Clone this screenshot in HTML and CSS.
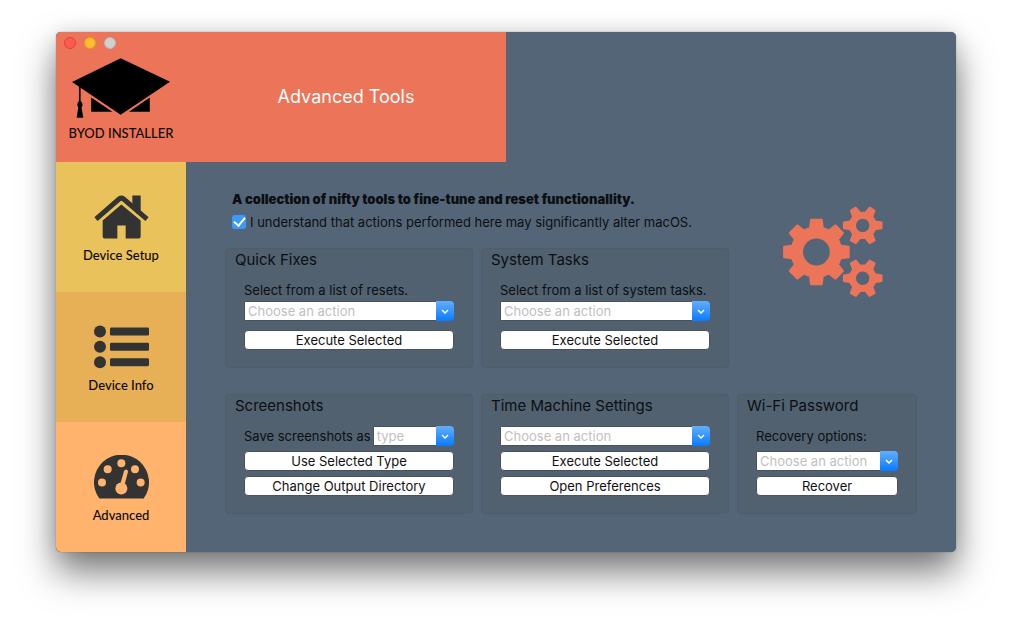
FILE: index.html
```html
<!DOCTYPE html>
<html lang="en">
<head>
<meta charset="utf-8">
<meta name="viewport" content="width=device-width, initial-scale=1">
<title>BYOD Installer</title>
<link rel="stylesheet" href="styles.css">
</head>
<body>
<div class="window">
  <header class="banner">
    <div class="brand">
      <div class="lights">
        <button class="light light-close" aria-label="Close"></button>
        <button class="light light-minimize" aria-label="Minimize"></button>
        <button class="light light-zoom" aria-label="Zoom" disabled></button>
      </div>
      <svg class="cap" viewBox="65 99 296 180" aria-hidden="true">
        <path d="M65 171 212 99 361 170 212 270Z"/>
        <path d="M123 218 187 261H123ZM300 218V261H237Z"/>
        <path d="M86 180h5v48q10 9 3 20l5 31H79l5-31q-7-11 2-20Z"/>
      </svg>
      <span class="brand-name">BYOD INSTALLER</span>
    </div>
    <h1 class="title">Advanced Tools</h1>
  </header>

  <nav class="sidebar">
    <a class="nav-item nav-setup" href="#setup">
      <svg class="nav-icon" viewBox="132 104 165 131" aria-hidden="true">
        <path d="M247 140V105h25v50l-12 5Z"/>
        <path d="M138 176 208 115q6-4 12 0l71 61" fill="none" stroke="#333" stroke-width="15"/>
        <path d="M158 180 214 132 272 180V228q0 6-6 6H227V195H202V234H164q-6 0-6-6Z"/>
      </svg>
      <span>Device Setup</span>
    </a>
    <a class="nav-item nav-info" href="#info">
      <svg class="nav-icon" viewBox="132 78 165 129" aria-hidden="true">
        <circle cx="150" cy="96" r="18"/><circle cx="150" cy="142" r="18"/><circle cx="150" cy="188" r="18"/>
        <rect x="180" y="84" width="117" height="24" rx="4"/><rect x="180" y="130" width="117" height="24" rx="4"/><rect x="180" y="176" width="117" height="24" rx="4"/>
      </svg>
      <span>Device Info</span>
    </a>
    <a class="nav-item nav-advanced" href="#advanced" aria-current="page">
      <svg class="nav-icon" viewBox="132 105 165 129" aria-hidden="true">
        <path d="M148 234A82.500 82.500 0 1 1 281 234Z"/>
        <g class="gauge-cut">
          <circle cx="214" cy="128" r="12"/><circle cx="173" cy="146" r="12"/><circle cx="255" cy="146" r="12"/>
          <circle cx="156" cy="186" r="12"/><circle cx="272" cy="186" r="12"/><circle cx="214" cy="204" r="18"/>
          <path d="M222 152q2-6 7-5 6 2 5 7L224 192 211 190Z"/>
        </g>
      </svg>
      <span>Advanced</span>
    </a>
  </nav>

  <main class="content">
    <div class="intro">
      <p class="lead">A collection of nifty tools to fine-tune and reset functionallity.</p>
      <label class="consent"><input class="check" type="checkbox" checked>I understand that actions performed here may significantly alter macOS.</label>
    </div>

    <svg class="gears" viewBox="0 0 100 92" aria-hidden="true">
      <defs>
        <path id="big-tooth" d="M-7.500-23-6.300-32.500q.2-.8 1-.8H5.300q.8 0 1 .8L7.500-23Z"/>
        <path id="small-tooth" d="M-5.200-11-3.800-19q.2-.8 1-.8H2.800q.8 0 1 .8L5.200-11Z"/>
        <g id="small-gear">
          <circle r="10.200" fill="none" stroke="#ec7559" stroke-width="7"/>
          <use href="#small-tooth" transform="rotate(30)"/><use href="#small-tooth" transform="rotate(90)"/>
          <use href="#small-tooth" transform="rotate(150)"/><use href="#small-tooth" transform="rotate(210)"/>
          <use href="#small-tooth" transform="rotate(270)"/><use href="#small-tooth" transform="rotate(330)"/>
        </g>
      </defs>
      <g transform="translate(33.400 46)">
        <circle r="19.600" fill="none" stroke="#ec7559" stroke-width="12.400"/>
        <use href="#big-tooth"/><use href="#big-tooth" transform="rotate(45)"/>
        <use href="#big-tooth" transform="rotate(90)"/><use href="#big-tooth" transform="rotate(135)"/>
        <use href="#big-tooth" transform="rotate(180)"/><use href="#big-tooth" transform="rotate(225)"/>
        <use href="#big-tooth" transform="rotate(270)"/><use href="#big-tooth" transform="rotate(315)"/>
      </g>
      <use href="#small-gear" transform="translate(79.700 19.400)"/>
      <use href="#small-gear" transform="translate(79.700 72.300)"/>
    </svg>

    <section class="panel">
      <h2 class="panel-title">Quick Fixes</h2>
      <div class="panel-body panel-roomy">
        <label class="caption" for="resets">Select from a list of resets.</label>
        <div class="combo">
          <select id="resets"><option>Choose an action</option></select>
          <span class="arrow"><svg viewBox="0 0 8 5" aria-hidden="true"><path d="M1 1 4 4 7 1"/></svg></span>
        </div>
        <button class="push">Execute Selected</button>
      </div>
    </section>

    <section class="panel">
      <h2 class="panel-title">System Tasks</h2>
      <div class="panel-body panel-roomy">
        <label class="caption" for="tasks">Select from a list of system tasks.</label>
        <div class="combo">
          <select id="tasks"><option>Choose an action</option></select>
          <span class="arrow"><svg viewBox="0 0 8 5" aria-hidden="true"><path d="M1 1 4 4 7 1"/></svg></span>
        </div>
        <button class="push">Execute Selected</button>
      </div>
    </section>

    <section class="panel panel-first">
      <h2 class="panel-title">Screenshots</h2>
      <div class="panel-body">
        <div class="field">
          <label class="caption" for="type">Save screenshots as</label>
          <div class="combo">
            <select id="type"><option>type</option></select>
            <span class="arrow"><svg viewBox="0 0 8 5" aria-hidden="true"><path d="M1 1 4 4 7 1"/></svg></span>
          </div>
        </div>
        <button class="push">Use Selected Type</button>
        <button class="push">Change Output Directory</button>
      </div>
    </section>

    <section class="panel">
      <h2 class="panel-title">Time Machine Settings</h2>
      <div class="panel-body">
        <div class="combo">
          <select aria-label="Time Machine action"><option>Choose an action</option></select>
          <span class="arrow"><svg viewBox="0 0 8 5" aria-hidden="true"><path d="M1 1 4 4 7 1"/></svg></span>
        </div>
        <button class="push">Execute Selected</button>
        <button class="push">Open Preferences</button>
      </div>
    </section>

    <section class="panel">
      <h2 class="panel-title">Wi-Fi Password</h2>
      <div class="panel-body">
        <label class="caption" for="wifi">Recovery options:</label>
        <div class="combo">
          <select id="wifi"><option>Choose an action</option></select>
          <span class="arrow"><svg viewBox="0 0 8 5" aria-hidden="true"><path d="M1 1 4 4 7 1"/></svg></span>
        </div>
        <button class="push">Recover</button>
      </div>
    </section>
  </main>
</div>
</body>
</html>
```

FILE: styles.css
```css
* { box-sizing: border-box; }

body {
  margin: 0;
  padding: 32px 56px 80px;
  background: #fff;
  color: #0c0f12;
  font: 13px/20px Inter, "Liberation Sans", sans-serif;
}

h1, h2, p { margin: 0; font-weight: 400; }

.window {
  display: grid;
  grid-template-columns: 130px 1fr;
  overflow: hidden;
  border-radius: 5px;
  background: #546577;
  box-shadow: 0 0 1px rgba(0, 0, 0, .6), 0 0 20px rgba(0, 0, 0, .1), 0 20px 36px rgba(0, 0, 0, .52);
}

.banner {
  grid-column: 1 / -1;
  display: grid;
  grid-template-columns: 130px 1fr;
  width: 50%;
  min-width: 300px;
  background: #ec7559;
}

.brand {
  display: flex;
  flex-direction: column;
  align-items: center;
  padding: 5px 0 19px;
}

.lights {
  display: flex;
  align-self: flex-start;
  gap: 8px;
  padding-left: 8px;
}

.light {
  width: 12px;
  height: 12px;
  padding: 0;
  border: 1px solid;
  border-radius: 50%;
}

.light-close { background: #fe5a52; border-color: #e1423b; }
.light-minimize { background: #ffbe2e; border-color: #e09e22; }
.light-zoom { background: #d0d0d0; border-color: #b9b4b2; }

.cap { width: 98px; height: 60px; margin: 9px 0 5px; }

.brand-name,
.nav-item { font-family: Lato, "Liberation Sans", sans-serif; font-size: 13px; font-weight: 500; color: #0c0a06; }

.title {
  align-self: center;
  text-align: center;
  font-size: 18px;
  color: #fff;
}

.sidebar { display: grid; grid-auto-rows: 1fr; }

.nav-item {
  display: flex;
  flex-direction: column;
  align-items: center;
  gap: 6px;
  padding: 33px 0 27px;
  text-decoration: none;
}

.nav-icon { width: 55px; height: 44px; fill: #333; }
.nav-setup { background: #eac25c; }
.nav-info { background: #e7b057; }
.nav-advanced { background: #ffb36c; }
.gauge-cut { fill: #ffb36c; }

.content {
  display: grid;
  grid-template-columns: 248fr 248fr 180fr;
  grid-template-rows: auto auto auto;
  column-gap: 8px;
  padding: 27px 39px 38px;
}

.intro { grid-column: 1 / 3; padding: 0 0 16px 7px; }
.lead { margin-bottom: 3px; font-weight: 900; }
.consent { display: flex; align-items: center; gap: 4px; }

.check {
  appearance: none;
  display: grid;
  place-items: center;
  width: 14px;
  height: 14px;
  margin: 0;
  border-radius: 3px;
  background: #3b99fc;
}

.check:checked::after {
  content: "";
  width: 5px;
  height: 9px;
  margin-bottom: 3px;
  border: solid #fff;
  border-width: 0 2px 2px 0;
  transform: rotate(40deg);
}

.gears {
  grid-column: 3;
  grid-row: 1 / 3;
  width: 100px;
  height: 92px;
  margin: 17px 0 0 46px;
  fill: #ec7559;
}

.panel {
  min-height: 120px;
  border: 1px solid #4e5d6c;
  border-radius: 4px;
  background: #516170;
}

.panel-first { grid-column: 1; }
.panel-first, .panel-first ~ .panel { margin-top: 26px; }

.panel-title { padding: 1px 9px; font-size: 15px; }

.panel-body { display: grid; gap: 5px; padding: 9px 18px 17px; }
.panel-roomy { gap: 9px; padding-bottom: 16px; }
.panel-roomy .caption { margin-bottom: -8px; }
.caption { white-space: nowrap; }

.field { display: flex; gap: 2px; }
.field .combo { flex: 1; }

.combo { position: relative; min-width: 0; }

.combo select {
  appearance: none;
  display: block;
  width: 100%;
  height: 20px;
  padding: 0 20px 0 3px;
  border: 1px solid #47525e;
  border-radius: 0 4px 4px 0;
  background: #fff;
  color: #bfbfbf;
  font: inherit;
  line-height: 18px;
}

.arrow {
  position: absolute;
  top: 0;
  right: 0;
  display: grid;
  place-items: center;
  width: 18px;
  height: 20px;
  border-radius: 0 4px 4px 0;
  background: linear-gradient(#62aefb, #0a7aff);
  pointer-events: none;
}

.arrow svg { width: 8px; height: 5px; fill: none; stroke: #fff; stroke-width: 1.500; overflow: visible; }

.push {
  height: 20px;
  padding: 0;
  border: 1px solid #47525e;
  border-radius: 4px;
  background: #fff;
  color: #111;
  font: inherit;
  line-height: 18px;
}
```
